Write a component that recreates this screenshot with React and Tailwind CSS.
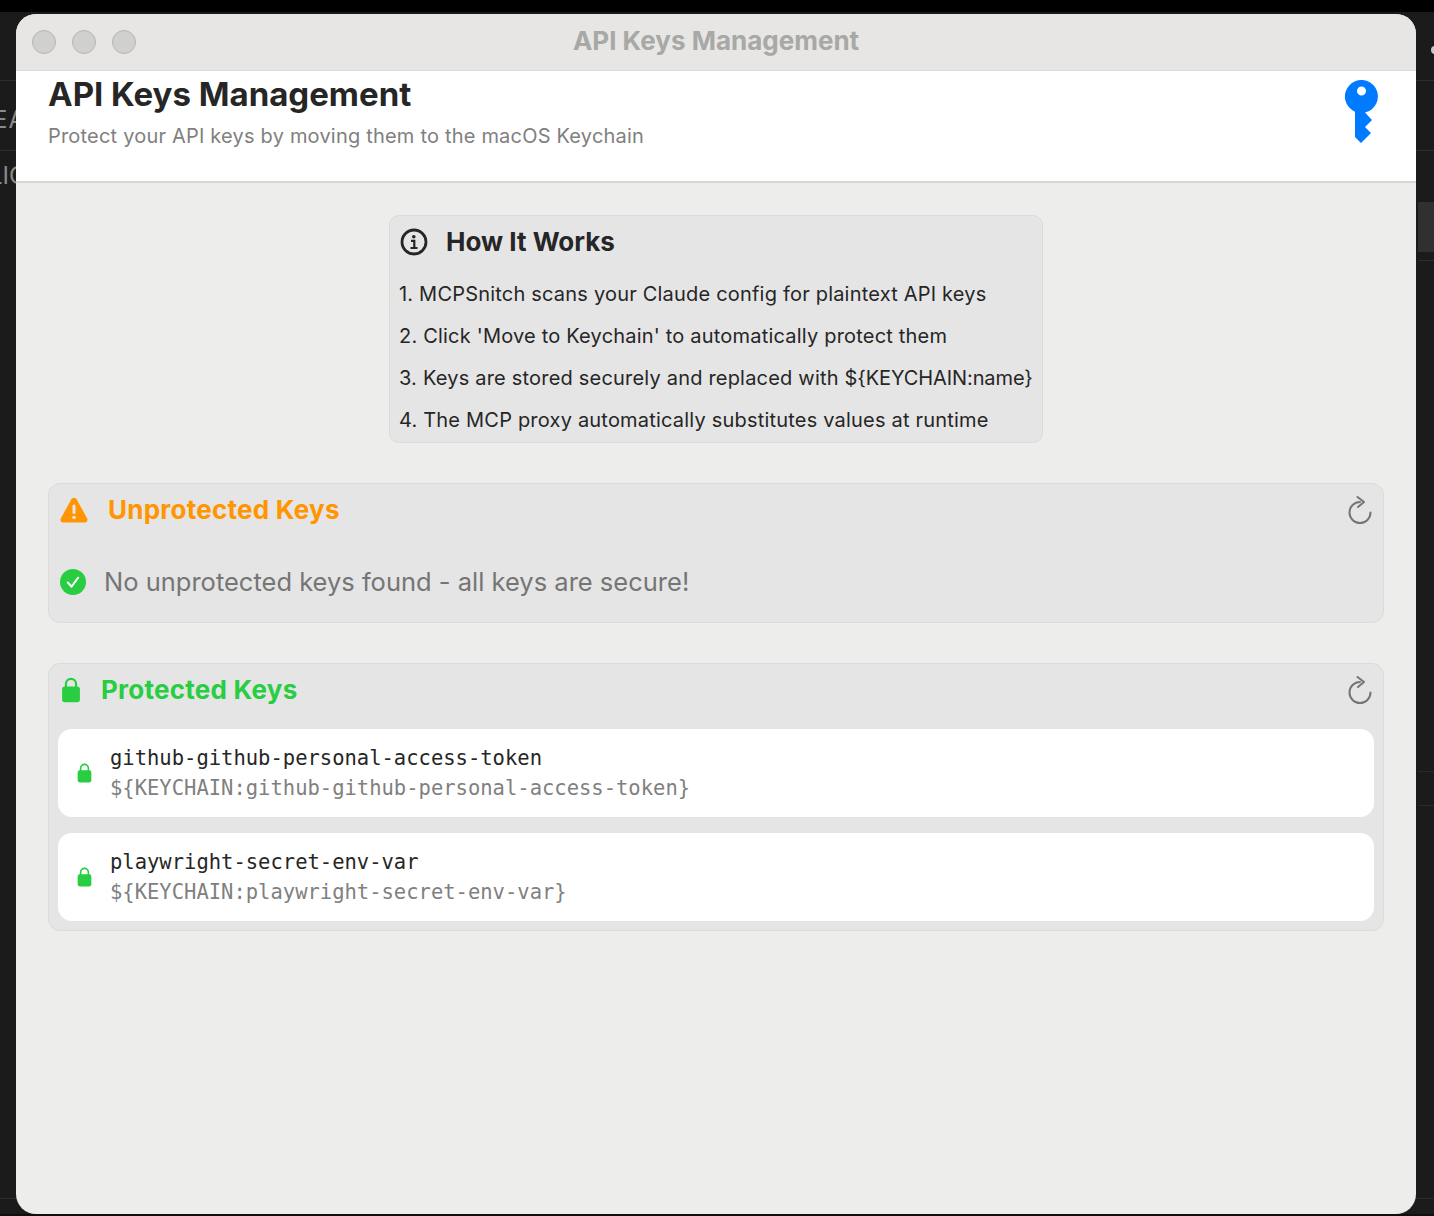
import React from "react";

const sans = "font-['Inter','Noto_Sans',sans-serif]";
const mono = "font-['DejaVu_Sans_Mono','Liberation_Mono',monospace]";

const Lock = ({ className }) => (
  <svg viewBox="0 0 14 19" className={className} fill="currentColor">
    <path d="M3.300 8V5a3.700 3.700 0 0 1 7.400 0v3" fill="none" stroke="currentColor" strokeWidth="1.600" />
    <rect x="0.500" y="7" width="13" height="11.500" rx="2" />
  </svg>
);

const KeyIcon = () => (
  <svg viewBox="0 0 33 64" className="h-16 w-[33px] text-[#007aff]" fill="currentColor">
    <path
      fillRule="evenodd"
      d="M10 31.700V57L16 63L26 53L20 47L27 40L20 32.600A16.500 16.500 0 1 0 10 31.700ZM16.500 6.500a4.500 4.500 0 1 1 0 9 4.500 4.500 0 0 1 0-9Z"
    />
  </svg>
);

const InfoIcon = () => (
  <svg viewBox="0 0 28 28" className="h-7 w-7 text-[#262626]" fill="none" stroke="currentColor">
    <circle cx="14" cy="14" r="12" strokeWidth="2.800" />
    <circle cx="13.800" cy="8.800" r="1.800" fill="currentColor" stroke="none" />
    <path d="M11 12.800h3.300v7M10.500 20h7" strokeWidth="2.200" />
  </svg>
);

const WarningIcon = () => (
  <svg viewBox="0 0 28 26" className="h-[26px] w-7">
    <path
      d="M11.400 2.200a3 3 0 0 1 5.200 0l10.500 19a3 3 0 0 1-2.600 4.400H3.500a3 3 0 0 1-2.600-4.400Z"
      fill="#ff9500"
    />
    <rect x="12.500" y="7.500" width="3" height="9.500" rx="1.500" fill="#e5e5e5" />
    <circle cx="14" cy="20.500" r="1.800" fill="#e5e5e5" />
  </svg>
);

const CheckIcon = () => (
  <svg viewBox="0 0 26 26" className="h-[26px] w-[26px]">
    <circle cx="13" cy="13" r="13" fill="#28cd41" />
    <path d="M7.800 13.500l3.700 4.200 6.700-9" fill="none" stroke="#fff" strokeWidth="2" strokeLinecap="round" strokeLinejoin="round" />
  </svg>
);

const Refresh = () => (
  <svg viewBox="0 0 24 28" className="h-7 w-6 text-[#757575]" fill="none" stroke="currentColor" strokeWidth="2" strokeLinecap="round" strokeLinejoin="round">
    <path d="M12 6A10.500 10.500 0 1 0 22.500 16.500" />
    <path d="M9.500 1L16 6l-6 5" />
  </svg>
);

const steps = [
  { text: "1. MCPSnitch scans your Claude config for plaintext API keys" },
  { text: "2. Click 'Move to Keychain' to automatically protect them" },
  { text: "3. Keys are stored securely and replaced with ", code: "${KEYCHAIN:name}" },
  { text: "4. The MCP proxy automatically substitutes values at runtime" },
];

const keys = ["github-github-personal-access-token", "playwright-secret-env-var"];

const Backdrop = () => (
  <>
    <div className="absolute left-0 top-0 h-3 w-full bg-black" />
    <div className="absolute bottom-0 left-0 h-[2px] w-full bg-[#0f0f0f]" />
    <div className="absolute left-0 top-20 h-px w-full bg-[#2e2e2e]" />
    <div className="absolute left-0 top-[150px] h-px w-full bg-[#2e2e2e]" />
    <div className="absolute left-0 top-[1198px] h-px w-full bg-[#2a2a2a]" />
    <div className="absolute right-0 top-[202px] h-[50px] w-4 bg-[#303030]" />
    <div className="absolute right-0 top-[260px] h-px w-4 bg-[#2e2e2e]" />
    <div className="absolute right-0 top-[771px] h-px w-4 bg-[#2a2a2a]" />
    <div className="absolute right-0 top-[805px] h-px w-4 bg-[#2a2a2a]" />
    <div className="absolute right-[-5px] top-[46px] h-2 w-2 rounded-full bg-[#c8c8c8]" />
    <div className={`absolute left-[-7px] top-[102px] text-[24px] tracking-[1px] text-[#8a8a8a] ${sans}`}>EA</div>
    <div className={`absolute left-[-11px] top-[158px] text-[24px] text-[#8a8a8a] ${sans}`}>LIC</div>
  </>
);

export default function App() {
  return (
    <div className={`relative h-[1216px] w-[1434px] overflow-hidden bg-[#1b1b1b] pl-4 pt-[14px] ${sans}`}>
      <Backdrop />
      <div className="relative flex h-[1200px] w-[1400px] flex-col overflow-hidden rounded-[20px] bg-[#ededeb]">
        <div className="relative flex h-[57px] shrink-0 items-center justify-center border-b border-[#dcdcda] bg-[#e7e6e4]">
          <div className="absolute left-4 flex gap-[16px]">
            <span className="h-6 w-6 rounded-full border border-[#b5b5b3] bg-[#d0d0ce]" />
            <span className="h-6 w-6 rounded-full border border-[#b5b5b3] bg-[#d0d0ce]" />
            <span className="h-6 w-6 rounded-full border border-[#b5b5b3] bg-[#d0d0ce]" />
          </div>
          <span className="mb-1 text-[26px] font-bold text-[#a8a8a6]">API Keys Management</span>
        </div>

        <div className="flex h-[112px] shrink-0 items-start justify-between border-b-2 border-[#d6d6d4] bg-white pl-8 pr-[38px]">
          <div>
            <h1 className="mt-[2px] text-[33px] font-bold leading-[42px] text-[#262626]">API Keys Management</h1>
            <p className="mt-[8px] text-[20px] leading-[26px] tracking-[0.2px] text-[#808080]">
              Protect your API keys by moving them to the macOS Keychain
            </p>
          </div>
          <div className="mt-[9px]">
            <KeyIcon />
          </div>
        </div>

        <div className="flex flex-col px-8 pt-8">
          <div className="mx-auto h-[228px] w-[654px] rounded-[10px] border border-[#dbdbd9] bg-[#e5e5e5] px-[9px] pt-[10px]">
            <div className="flex items-center gap-[18px] pl-px text-[#262626]">
              <InfoIcon />
              <span className="text-[26px] font-bold leading-8">How It Works</span>
            </div>
            <div className="mt-[23px] flex flex-col gap-[16px]">
              {steps.map((s) => (
                <p key={s.text} className="whitespace-nowrap text-[20px] leading-[26px] tracking-[0.2px] text-[#262626]">
                  {s.text}
                  {s.code && <span className="tracking-[-0.1px]">{s.code}</span>}
                </p>
              ))}
            </div>
          </div>

          <section className="mt-10 h-[140px] rounded-[12px] border border-[#dbdbd9] bg-[#e5e5e5] px-[11px]">
            <div className="flex h-[52px] items-center justify-between">
              <div className="flex items-center gap-[20px]">
                <WarningIcon />
                <h2 className="mb-[2px] text-[26px] font-bold tracking-[0.25px] text-[#ff9500]">Unprotected Keys</h2>
              </div>
              <Refresh />
            </div>
            <div className="mt-[27px] flex items-center gap-[18px]">
              <CheckIcon />
              <span className="text-[25.500px] text-[#757575]">No unprotected keys found - all keys are secure!</span>
            </div>
          </section>

          <section className="mt-10 h-[268px] rounded-[12px] border border-[#dbdbd9] bg-[#e5e5e5] px-[9px]">
            <div className="flex h-[52px] items-center justify-between pr-[2px]">
              <div className="flex items-center gap-[20px] pl-[3px]">
                <Lock className="h-[26px] w-5 text-[#28cd41]" />
                <h2 className="mb-[2px] text-[26px] font-bold tracking-[0.25px] text-[#28cd41]">Protected Keys</h2>
              </div>
              <Refresh />
            </div>
            <div className="mt-[13px] flex flex-col gap-4">
              {keys.map((k) => (
                <div key={k} className="flex h-[88px] items-center gap-[18px] rounded-[14px] bg-white pl-[19px]">
                  <Lock className="h-[20px] w-[15px] text-[#28cd41]" />
                  <div className={mono}>
                    <div className="text-[20.500px] leading-[30px] text-[#262626]">{k}</div>
                    <div className="text-[20.500px] leading-[30px] text-[#808080]">{`\${KEYCHAIN:${k}}`}</div>
                  </div>
                </div>
              ))}
            </div>
          </section>
        </div>
      </div>
    </div>
  );
}
